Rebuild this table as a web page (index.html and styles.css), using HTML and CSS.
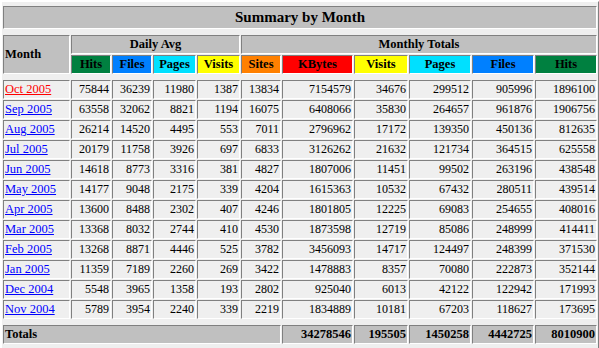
FILE: index.html
```html
<!DOCTYPE html>
<html lang="en">
<head>
<meta charset="utf-8">
<title>Summary by Month</title>
<link rel="stylesheet" href="styles.css">
</head>
<body>
<table class="summary">
  <colgroup>
    <col class="c-month"><col class="c40"><col class="c40"><col class="c43"><col class="c43"><col class="c40">
    <col class="c71"><col class="c54"><col class="c62"><col class="c62"><col class="c62">
  </colgroup>
  <tbody>
    <tr class="gap gap-top"><td colspan="11"></td></tr>
    <tr><th colspan="11" class="title">Summary by Month</th></tr>
    <tr class="gap"><td colspan="11"></td></tr>
    <tr>
      <th rowspan="2" class="head month-head">Month</th>
      <th colspan="4" class="head">Daily Avg</th>
      <th colspan="6" class="head">Monthly Totals</th>
    </tr>
    <tr>
      <th class="head hits">Hits</th>
      <th class="head files">Files</th>
      <th class="head pages">Pages</th>
      <th class="head visits">Visits</th>
      <th class="head sites">Sites</th>
      <th class="head kbytes">KBytes</th>
      <th class="head visits">Visits</th>
      <th class="head pages">Pages</th>
      <th class="head files">Files</th>
      <th class="head hits">Hits</th>
    </tr>
    <tr class="gap"><td colspan="11"></td></tr>
    <tr><td class="m"><a href="#oct" class="visited">Oct 2005</a></td><td>75844</td><td>36239</td><td>11980</td><td>1387</td><td>13834</td><td>7154579</td><td>34676</td><td>299512</td><td>905996</td><td>1896100</td></tr>
    <tr><td class="m"><a href="#sep">Sep 2005</a></td><td>63558</td><td>32062</td><td>8821</td><td>1194</td><td>16075</td><td>6408066</td><td>35830</td><td>264657</td><td>961876</td><td>1906756</td></tr>
    <tr><td class="m"><a href="#aug">Aug 2005</a></td><td>26214</td><td>14520</td><td>4495</td><td>553</td><td>7011</td><td>2796962</td><td>17172</td><td>139350</td><td>450136</td><td>812635</td></tr>
    <tr><td class="m"><a href="#jul">Jul 2005</a></td><td>20179</td><td>11758</td><td>3926</td><td>697</td><td>6833</td><td>3126262</td><td>21632</td><td>121734</td><td>364515</td><td>625558</td></tr>
    <tr><td class="m"><a href="#jun">Jun 2005</a></td><td>14618</td><td>8773</td><td>3316</td><td>381</td><td>4827</td><td>1807006</td><td>11451</td><td>99502</td><td>263196</td><td>438548</td></tr>
    <tr><td class="m"><a href="#may">May 2005</a></td><td>14177</td><td>9048</td><td>2175</td><td>339</td><td>4204</td><td>1615363</td><td>10532</td><td>67432</td><td>280511</td><td>439514</td></tr>
    <tr><td class="m"><a href="#apr">Apr 2005</a></td><td>13600</td><td>8488</td><td>2302</td><td>407</td><td>4246</td><td>1801805</td><td>12225</td><td>69083</td><td>254655</td><td>408016</td></tr>
    <tr><td class="m"><a href="#mar">Mar 2005</a></td><td>13368</td><td>8032</td><td>2744</td><td>410</td><td>4530</td><td>1873598</td><td>12719</td><td>85086</td><td>248999</td><td>414411</td></tr>
    <tr><td class="m"><a href="#feb">Feb 2005</a></td><td>13268</td><td>8871</td><td>4446</td><td>525</td><td>3782</td><td>3456093</td><td>14717</td><td>124497</td><td>248399</td><td>371530</td></tr>
    <tr><td class="m"><a href="#jan">Jan 2005</a></td><td>11359</td><td>7189</td><td>2260</td><td>269</td><td>3422</td><td>1478883</td><td>8357</td><td>70080</td><td>222873</td><td>352144</td></tr>
    <tr><td class="m"><a href="#dec">Dec 2004</a></td><td>5548</td><td>3965</td><td>1358</td><td>193</td><td>2802</td><td>925040</td><td>6013</td><td>42122</td><td>122942</td><td>171993</td></tr>
    <tr><td class="m"><a href="#nov">Nov 2004</a></td><td>5789</td><td>3954</td><td>2240</td><td>339</td><td>2219</td><td>1834889</td><td>10181</td><td>67203</td><td>118627</td><td>173695</td></tr>
    <tr class="gap"><td colspan="11"></td></tr>
    <tr class="totals">
      <th colspan="6" class="tot-label">Totals</th>
      <th>34278546</th><th>195505</th><th>1450258</th><th>4442725</th><th>8010900</th>
    </tr>
    <tr class="gap"><td colspan="11"></td></tr>
  </tbody>
</table>
</body>
</html>
```

FILE: styles.css
```css
html, body {
  margin: 0;
  padding: 0;
  background: #efefef;
  overflow: hidden;
}

body {
  font-family: "Liberation Serif", "Times New Roman", serif;
  color: #000;
}

.summary {
  width: 600px;
  table-layout: fixed;
  border-collapse: separate;
  border-spacing: 1px;
  border: 2px solid;
  border-color: #ffffff #808080 #808080 #ffffff;
}

.c-month { width: 67px; }
.c40 { width: 40px; }
.c43 { width: 43px; }
.c54 { width: 54px; }
.c62 { width: 62px; }
.c71 { width: 71px; }

.summary th,
.summary td {
  box-sizing: border-box;
  border: 1px solid;
  border-color: #808080 #ffffff #ffffff #808080;
  padding: 1px;
  font-size: 12px;
  line-height: 15px;
  text-align: right;
  white-space: nowrap;
  overflow: hidden;
}

.summary td.m {
  text-align: left;
}

.summary a {
  color: #0000ff;
  font-size: 12.5px;
}

.summary a.visited {
  color: #ff0000;
}

.summary .gap td {
  border: 0;
  padding: 0;
  height: 4px;
  line-height: 0;
  font-size: 0;
}

.summary .gap-top td {
  height: 2px;
}

.summary th.title {
  background: #c0c0c0;
  text-align: center;
  font-size: 15px;
  line-height: 19px;
}

.summary th.head {
  background: #c0c0c0;
  text-align: center;
  font-weight: bold;
  font-size: 12.5px;
}

.summary th.month-head {
  text-align: left;
}

.summary th.hits { background: #008040; }
.summary th.files { background: #0080ff; }
.summary th.pages { background: #00e0ff; }
.summary th.visits { background: #ffff00; }
.summary th.sites { background: #ff8000; }
.summary th.kbytes { background: #ff0000; }

.summary .totals th {
  background: #c0c0c0;
  text-align: right;
  font-size: 12.5px;
}

.summary .totals th.tot-label {
  text-align: left;
}
```
